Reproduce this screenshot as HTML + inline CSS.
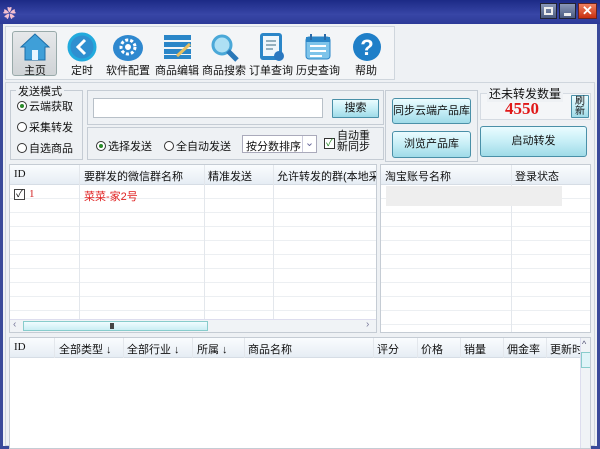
<!DOCTYPE html>
<html><head><meta charset="utf-8"><style>
*{box-sizing:border-box;margin:0;padding:0}
body{width:600px;height:446px;overflow:hidden;background:#3a4a9a;font-family:"Liberation Sans","Noto Sans CJK SC",sans-serif;font-size:11px;color:#111;position:relative}
.a{position:absolute;white-space:nowrap}
.title{left:0;top:0;width:600px;height:24px;background:linear-gradient(#1c2a86,#3846a6 60%,#2c3a98)}
.win{left:3px;top:24px;width:594px;height:422px;background:#eef1f4}
.pan{background:#f3f5f7;border:1px solid #cfd6dd}
.btn{border:1px solid #4a90a8;border-radius:3px;background:linear-gradient(#eafcff,#c6eef6 50%,#9fdbe8);text-align:center;font-size:11px}
.tl{font-size:11px;text-align:center;width:56px}
.tbl{background:#fff;border:1px solid #c5ccd4}
.hd{background:linear-gradient(#fafcfe,#e6edf4);height:20px;border-bottom:1px solid #d6dde5}
.hd span{position:absolute;top:3px;font-size:11px}
.vl{position:absolute;width:1px;background:#e3e7ec}
.rad{display:inline-block;width:10px;height:10px;border:1px solid #333;border-radius:50%;vertical-align:-1px;margin-right:2px;position:relative;background:#fff}
.rad.on:after{content:"";position:absolute;left:2px;top:2px;width:4px;height:4px;border-radius:50%;background:#2a8a2a}
</style></head><body>
<div class="a title"></div>
<div class="a" style="left:3px;top:3px;width:14px;height:14px;color:#f4c0d0;font-size:13px">✿</div>
<div class="a" style="left:540px;top:3px;width:17px;height:16px;background:linear-gradient(#8a98b8,#4a5a80);border:1px solid #223"><div style="margin:3px;border:2px solid #eee;height:8px"></div></div>
<div class="a" style="left:559px;top:3px;width:17px;height:16px;background:linear-gradient(#8a98b8,#4a5a80);border:1px solid #223"><div style="margin:9px 4px 0;background:#eee;height:3px"></div></div>
<div class="a" style="left:578px;top:3px;width:19px;height:16px;background:linear-gradient(#f08060,#c83010);border:1px solid #622;color:#fff;font-weight:bold;text-align:center;line-height:14px;font-size:13px">✕</div>
<div class="a win"></div>
<div class="a pan" style="left:5px;top:26px;width:390px;height:54px"></div>
<div class="a" style="left:12px;top:31px;width:45px;height:45px;border:1px solid #9aa;border-radius:3px;background:linear-gradient(#e6e8ea,#cfd3d6)"></div>
<svg class="a" style="left:19px;top:32px" width="32" height="30"><path d="M16 2 L2 15 L6 15 L6 28 L26 28 L26 15 L30 15 Z" fill="#3f9fd8" stroke="#1d6ea8"/><rect x="13" y="18" width="6" height="10" fill="#e8f6ff"/></svg>
<svg class="a" style="left:67px;top:32px" width="30" height="30"><circle cx="15" cy="15" r="13" fill="#2f8fd0" stroke="#22aadd" stroke-width="3"/><path d="M18 8 L11 15 L18 22" stroke="#fff" stroke-width="3" fill="none"/></svg>
<svg class="a" style="left:112px;top:32px" width="32" height="30"><ellipse cx="16" cy="16" rx="15" ry="13" fill="#2e88cf"/><circle cx="16" cy="15" r="7" fill="none" stroke="#fff" stroke-width="3" stroke-dasharray="3 2"/><circle cx="16" cy="15" r="3" fill="#fff"/></svg>
<svg class="a" style="left:163px;top:34px" width="30" height="26"><rect x="1" y="1" width="27" height="5" fill="#2a86c8"/><rect x="1" y="8" width="27" height="5" fill="#2a86c8"/><rect x="1" y="15" width="27" height="5" fill="#2a86c8"/><rect x="1" y="21" width="27" height="4" fill="#2a86c8"/><path d="M14 22 L27 10" stroke="#e8c060" stroke-width="3"/></svg>
<svg class="a" style="left:210px;top:33px" width="30" height="30"><circle cx="12" cy="12" r="9" fill="#aee0f4" stroke="#4aa8d8" stroke-width="3"/><path d="M18 18 L27 27" stroke="#2a78b8" stroke-width="5"/></svg>
<svg class="a" style="left:258px;top:31px" width="28" height="32"><rect x="2" y="2" width="22" height="27" rx="3" fill="#2a86c8"/><rect x="5" y="5" width="16" height="20" fill="#eef6fb"/><path d="M8 10h10M8 14h10M8 18h7" stroke="#79a" stroke-width="1.5"/><circle cx="21" cy="25" r="5" fill="#2a78c0"/></svg>
<svg class="a" style="left:304px;top:32px" width="30" height="30"><rect x="2" y="5" width="24" height="22" rx="3" fill="#7ec4ea" stroke="#2a86c8"/><rect x="2" y="5" width="24" height="5" fill="#2a86c8"/><path d="M7 2v6M21 2v6" stroke="#2a6aa8" stroke-width="2"/><path d="M6 14h16M6 19h16M6 24h12" stroke="#fff" stroke-width="2"/></svg>
<svg class="a" style="left:352px;top:31px" width="30" height="32"><circle cx="15" cy="16" r="14" fill="#1f7fc8"/><text x="15" y="24" font-size="22" font-weight="bold" fill="#fff" text-anchor="middle" font-family="Liberation Sans">?</text></svg>
<div class="a tl" style="left:7px;top:62px">主页</div>
<div class="a tl" style="left:54px;top:62px">定时</div>
<div class="a tl" style="left:100px;top:62px">软件配置</div>
<div class="a tl" style="left:149px;top:62px">商品编辑</div>
<div class="a tl" style="left:196px;top:62px">商品搜索</div>
<div class="a tl" style="left:243px;top:62px">订单查询</div>
<div class="a tl" style="left:290px;top:62px">历史查询</div>
<div class="a tl" style="left:338px;top:62px">帮助</div>
<div class="a pan" style="left:5px;top:82px;width:590px;height:364px;background:#eef1f4"></div>
<div class="a" style="left:10px;top:90px;width:73px;height:70px;border:1px solid #c5ccd4"></div>
<div class="a" style="left:16px;top:83px;background:#eef1f4;padding:0 2px">发送模式</div>
<div class="a" style="left:17px;top:98px"><span class="rad on"></span>云端获取</div>
<div class="a" style="left:17px;top:119px"><span class="rad"></span>采集转发</div>
<div class="a" style="left:17px;top:140px"><span class="rad"></span>自选商品</div>
<div class="a" style="left:87px;top:90px;width:297px;height:35px;border:1px solid #c5ccd4"></div>
<div class="a" style="left:93px;top:98px;width:230px;height:20px;background:#fff;border:1px solid #b8c0c8"></div>
<div class="a btn" style="left:332px;top:99px;width:47px;height:19px;line-height:17px;border-radius:1px">搜索</div>
<div class="a" style="left:87px;top:127px;width:297px;height:33px;border:1px solid #c5ccd4"></div>
<div class="a" style="left:96px;top:138px"><span class="rad on"></span>选择发送</div>
<div class="a" style="left:164px;top:138px"><span class="rad"></span>全自动发送</div>
<div class="a" style="left:242px;top:135px;width:75px;height:18px;background:#fff;border:1px solid #aab;padding:2px 3px">按分数排序<span style="position:absolute;right:0;top:0;width:14px;height:16px;border-left:1px solid #ccd;text-align:center;color:#669">⌄</span></div>
<div class="a" style="left:324px;top:138px;width:11px;height:11px;border:1px solid #333;background:#fff;color:#2a8a2a;font-size:10px;line-height:9px;text-align:center">✓</div>
<div class="a" style="left:337px;top:131px;line-height:11px">自动重<br>新同步</div>
<div class="a" style="left:385px;top:90px;width:93px;height:72px;border:1px solid #c5ccd4"></div>
<div class="a btn" style="left:392px;top:98px;width:79px;height:26px;line-height:24px">同步云端产品库</div>
<div class="a btn" style="left:392px;top:131px;width:79px;height:27px;line-height:25px">浏览产品库</div>
<div class="a" style="left:480px;top:93px;width:111px;height:27px;border:1px solid #d5dbe2;background:#f4f6f8"></div>
<div class="a" style="left:487px;top:85px;background:#eef1f4;padding:0 2px;font-size:12px">还未转发数量</div>
<div class="a" style="left:505px;top:99px;color:#e01818;font-weight:bold;font-size:17px;font-family:'Liberation Serif',serif">4550</div>
<div class="a btn" style="left:571px;top:95px;width:18px;height:23px;font-size:10px;line-height:10px;padding-top:1px;border-radius:1px">刷<br>新</div>
<div class="a btn" style="left:480px;top:126px;width:107px;height:31px;line-height:29px">启动转发</div>
<div class="a tbl" style="left:9px;top:164px;width:368px;height:169px;overflow:hidden">
<div class="a" style="left:0;top:20px;width:368px;height:150px;background:repeating-linear-gradient(#fff 0,#fff 13px,#eceff2 13px,#eceff2 14px)"></div>
<div class="a hd" style="left:0;top:0;width:368px"><span style="left:4px;font-family:'Liberation Serif',serif">ID</span><span style="left:74px">要群发的微信群名称</span><span style="left:198px">精准发送</span><span style="left:267px;white-space:nowrap">允许转发的群(本地采</span></div>
<div class="vl" style="left:69px;top:0;height:155px"></div><div class="vl" style="left:194px;top:0;height:155px"></div><div class="vl" style="left:263px;top:0;height:155px"></div>
<div class="a" style="left:4px;top:24px;width:11px;height:11px;border:1px solid #444;background:#fff;font-size:10px;line-height:9px;text-align:center">✓</div>
<div class="a" style="left:19px;top:23px;color:#d02020;font-family:'Liberation Serif',serif">1</div>
<div class="a" style="left:74px;top:23px;color:#e02020">菜菜-家2号</div>
<div class="a" style="left:0;top:154px;width:366px;height:13px;background:#f0f3f6;border-top:1px solid #dde"><span class="a" style="left:3px;top:-1px;color:#779;font-size:10px">‹</span><div class="a" style="left:13px;top:1px;width:185px;height:10px;border:1px solid #8cc;background:linear-gradient(#f0fcff,#cbeef4)"></div><div class="a" style="left:100px;top:3px;width:4px;height:6px;background:#444"></div><span class="a" style="left:356px;top:-1px;color:#779;font-size:10px">›</span></div>
</div>
<div class="a tbl" style="left:380px;top:164px;width:211px;height:169px;overflow:hidden">
<div class="a" style="left:0;top:20px;width:211px;height:150px;background:repeating-linear-gradient(#fff 0,#fff 13px,#eceff2 13px,#eceff2 14px)"></div>
<div class="a hd" style="left:0;top:0;width:211px"><span style="left:4px">淘宝账号名称</span><span style="left:134px">登录状态</span></div>
<div class="vl" style="left:130px;top:0;height:169px"></div>
<div class="a" style="left:5px;top:21px;width:176px;height:20px;background:#eeeeee"></div>
</div>
<div class="a tbl" style="left:9px;top:337px;width:582px;height:112px;overflow:hidden">
<div class="a hd" style="left:0;top:0;width:570px"><span style="left:4px;font-family:'Liberation Serif',serif">ID</span><span style="left:49px">全部类型 ↓</span><span style="left:117px">全部行业 ↓</span><span style="left:187px">所属 ↓</span><span style="left:238px">商品名称</span><span style="left:367px">评分</span><span style="left:411px">价格</span><span style="left:454px">销量</span><span style="left:497px">佣金率</span><span style="left:540px;white-space:nowrap">更新时</span></div>
<div class="vl" style="left:44px;top:0;height:20px"></div><div class="vl" style="left:113px;top:0;height:20px"></div><div class="vl" style="left:182px;top:0;height:20px"></div><div class="vl" style="left:234px;top:0;height:20px"></div><div class="vl" style="left:363px;top:0;height:20px"></div><div class="vl" style="left:407px;top:0;height:20px"></div><div class="vl" style="left:450px;top:0;height:20px"></div><div class="vl" style="left:493px;top:0;height:20px"></div><div class="vl" style="left:536px;top:0;height:20px"></div>
<div class="a" style="left:570px;top:0;width:11px;height:112px;background:#f0f3f6;border-left:1px solid #dde"><span class="a" style="left:1px;top:1px;font-size:9px;color:#557">^</span><div class="a" style="left:0;top:14px;width:10px;height:16px;border:1px solid #8cc;background:#dff4f8"></div></div>
</div>
</body></html>
